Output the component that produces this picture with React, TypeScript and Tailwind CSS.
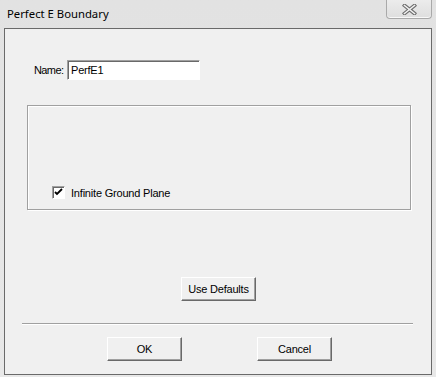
import React from 'react';

const btn =
  'h-[24px] w-[75px] bg-[#f0f0f0] border border-t-white border-l-white border-r-[#696969] border-b-[#696969] shadow-[inset_-1px_-1px_0_#a0a0a0] text-[11px] tracking-[-0.2px] text-black flex items-center justify-center';

function CloseGlyph() {
  return (
    <svg width="15" height="11" viewBox="0 0 15 11">
      <path
        d="M2.5 1.5 L12.5 9.5 M12.5 1.5 L2.5 9.5"
        stroke="#6e6e6e"
        strokeWidth="3.6"
        strokeLinecap="square"
        fill="none"
      />
      <path
        d="M2.5 1.5 L12.5 9.5 M12.5 1.5 L2.5 9.5"
        stroke="#f2f2f2"
        strokeWidth="1.6"
        strokeLinecap="square"
        fill="none"
      />
    </svg>
  );
}

function Check() {
  return (
    <div className="w-[13px] h-[13px] bg-white border border-t-[#a0a0a0] border-l-[#a0a0a0] border-r-white border-b-white shadow-[inset_1px_1px_0_#696969] flex items-center justify-center">
      <svg width="9" height="9" viewBox="0 0 9 9">
        <path d="M1 4 L3 6 L8 1" stroke="#000" strokeWidth="1.8" fill="none" />
      </svg>
    </div>
  );
}

export default function App() {
  return (
    <div
      className="w-[436px] h-[377px] bg-gradient-to-b from-[#e2e2e2] to-[#e8e8e8] flex flex-col overflow-hidden"
      style={{ fontFamily: '"Liberation Sans", Arial, sans-serif' }}
    >
      {/* title bar */}
      <div className="h-[28px] flex items-start shrink-0">
        <div
          className="pl-[7px] pt-[6px] text-[11.3px] text-black"
          style={{ fontFamily: '"Noto Sans", "Open Sans", sans-serif' }}
        >
          Perfect E Boundary
        </div>
        <div className="ml-auto mr-[4px] w-[46px] h-[19px] rounded-b-[4px] border border-t-0 border-[#a9a9a9] bg-gradient-to-b from-[#ececec] to-[#dedede] flex items-center justify-center shadow-[inset_0_-1px_0_#f8f8f8]">
          <CloseGlyph />
        </div>
      </div>

      {/* client area */}
      <div className="mx-[4px] mb-[2px] flex-1 border border-[#6a6a6a] bg-[#f0f0f0] flex flex-col text-[11px] tracking-[-0.2px] text-black">
        <div className="flex items-center pt-[31px] pl-[29px]">
          <span className="w-[33px] tracking-[-0.6px]">Name:</span>
          <div className="w-[133px] h-[20px] bg-white border border-t-[#a0a0a0] border-l-[#a0a0a0] border-r-white border-b-white shadow-[inset_1px_1px_0_#696969] flex items-center pl-[3px]">
            PerfE1
          </div>
        </div>

        <div className="ml-[22px] mt-[25px] w-[384px] h-[105px] border border-[#a0a0a0] shadow-[1px_1px_0_#ffffff,inset_1px_1px_0_#ffffff] flex flex-col justify-end pb-[8px] pl-[24px]">
          <div className="flex items-center gap-[6px]">
            <Check />
            <span>Infinite Ground Plane</span>
          </div>
        </div>

        <div className="ml-[176px] mt-[67px]">
          <button className={btn}>Use Defaults</button>
        </div>

        <div className="ml-[17px] mt-[22px] w-[391px] border-t border-t-[#a0a0a0] border-b border-b-white" />

        <div className="flex mt-[12px] pl-[102px] gap-[75px]">
          <button className={btn}>OK</button>
          <button className={btn}>Cancel</button>
        </div>
      </div>
    </div>
  );
}
